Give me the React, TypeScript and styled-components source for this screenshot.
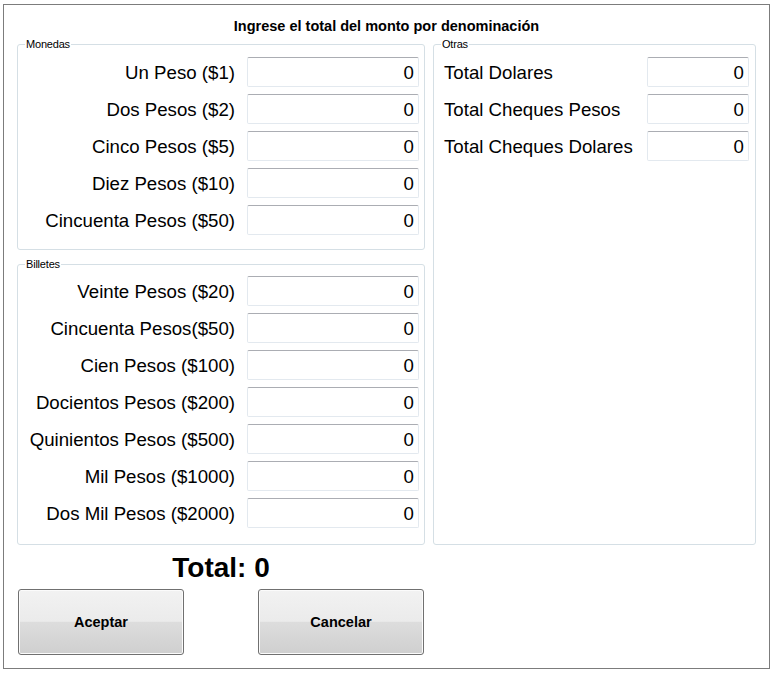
import React from "react";
import styled, { createGlobalStyle } from "styled-components";

const GlobalStyle = createGlobalStyle`
  html, body { margin: 0; padding: 0; background: #ffffff; }
  body { font-family: "Liberation Sans", Arial, sans-serif; color: #000; }
  * { box-sizing: border-box; }
`;

const Window = styled.div`
  margin: 4px 0 0 3px;
  width: 767px;
  height: 665px;
  border: 1px solid #7c7c7c;
  background: #ffffff;
  padding: 0 13px;
  display: flex;
  flex-direction: column;
`;

const Title = styled.div`
  padding-top: 11px;
  line-height: 20px;
  font-size: 14.5px;
  font-weight: bold;
  text-align: center;
  white-space: nowrap;
`;

const Columns = styled.div`
  margin-top: 8px;
  display: grid;
  grid-template-columns: 408px 323px;
  column-gap: 8px;
`;

const LeftColumn = styled.div`
  display: flex;
  flex-direction: column;
  gap: 14px;
`;

const Group = styled.div<{ $top: number; $bottom: number }>`
  position: relative;
  border: 1px solid #d5dfe5;
  border-radius: 3px;
  padding: ${(p) => p.$top}px 5px ${(p) => p.$bottom}px 8px;
  display: flex;
  flex-direction: column;
  gap: 7px;
`;

const OtherGroup = styled(Group)`
  padding-left: 10px;
  padding-right: 6px;
`;

const Legend = styled.span`
  position: absolute;
  top: -7px;
  left: 7px;
  padding: 0 1px;
  background: #ffffff;
  font-size: 11px;
  line-height: 13px;
  letter-spacing: -0.2px;
  color: #000;
`;

const Row = styled.div<{ $input: number }>`
  display: grid;
  grid-template-columns: 1fr ${(p) => p.$input}px;
  column-gap: 12px;
  align-items: center;
  height: 30px;
`;

const Label = styled.span<{ $align: "left" | "right" }>`
  font-size: 18.67px;
  padding-top: 2px;
  text-align: ${(p) => p.$align};
  white-space: nowrap;
`;

const Input = styled.input`
  height: 30px;
  width: 100%;
  border: 1px solid #e3e9ef;
  border-top-color: #abadb3;
  border-radius: 2px;
  padding: 2px 4px 0 4px;
  text-align: right;
  font-family: "Liberation Sans", Arial, sans-serif;
  font-size: 18.67px;
  color: #000;
  background: #fff;
  outline: none;
`;

const Footer = styled.div`
  width: 408px;
  display: flex;
  flex-direction: column;
`;

const TotalRow = styled.div`
  height: 44px;
  display: flex;
  align-items: center;
  justify-content: center;
  padding-top: 2px;
  font-size: 28px;
  font-weight: bold;
`;

const Buttons = styled.div`
  display: flex;
  justify-content: space-between;
  padding: 0 1px;
`;

const Button = styled.button`
  width: 166px;
  height: 66px;
  border: 1px solid #707070;
  border-radius: 3px;
  background: linear-gradient(#f2f2f2 0%, #ebebeb 49%, #dddddd 50%, #cfcfcf 100%);
  box-shadow: inset 0 0 0 1px #fbfbfb;
  font-family: "Liberation Sans", Arial, sans-serif;
  font-size: 14.5px;
  font-weight: bold;
  color: #000;
  padding: 0;
`;

type Field = { label: string };

const monedas: Field[] = [
  { label: "Un Peso ($1)" },
  { label: "Dos Pesos ($2)" },
  { label: "Cinco Pesos ($5)" },
  { label: "Diez Pesos ($10)" },
  { label: "Cincuenta Pesos ($50)" },
];

const billetes: Field[] = [
  { label: "Veinte Pesos ($20)" },
  { label: "Cincuenta Pesos($50)" },
  { label: "Cien Pesos ($100)" },
  { label: "Docientos Pesos ($200)" },
  { label: "Quinientos Pesos ($500)" },
  { label: "Mil Pesos ($1000)" },
  { label: "Dos Mil Pesos ($2000)" },
];

const otras: Field[] = [
  { label: "Total Dolares" },
  { label: "Total Cheques Pesos" },
  { label: "Total Cheques Dolares" },
];

function Fields({ items, input, align }: { items: Field[]; input: number; align: "left" | "right" }) {
  return (
    <>
      {items.map((f) => (
        <Row key={f.label} $input={input}>
          <Label $align={align}>{f.label}</Label>
          <Input defaultValue="0" />
        </Row>
      ))}
    </>
  );
}

export default function App() {
  return (
    <>
      <GlobalStyle />
      <Window>
        <Title>Ingrese el total del monto por denominación</Title>
        <Columns>
          <LeftColumn>
            <Group $top={12} $bottom={14}>
              <Legend>Monedas</Legend>
              <Fields items={monedas} input={172} align="right" />
            </Group>
            <Group $top={11} $bottom={16}>
              <Legend>Billetes</Legend>
              <Fields items={billetes} input={172} align="right" />
            </Group>
          </LeftColumn>
          <OtherGroup $top={12} $bottom={14}>
            <Legend>Otras</Legend>
            <Fields items={otras} input={102} align="left" />
          </OtherGroup>
        </Columns>
        <Footer>
          <TotalRow>Total: 0</TotalRow>
          <Buttons>
            <Button>Aceptar</Button>
            <Button>Cancelar</Button>
          </Buttons>
        </Footer>
      </Window>
    </>
  );
}
